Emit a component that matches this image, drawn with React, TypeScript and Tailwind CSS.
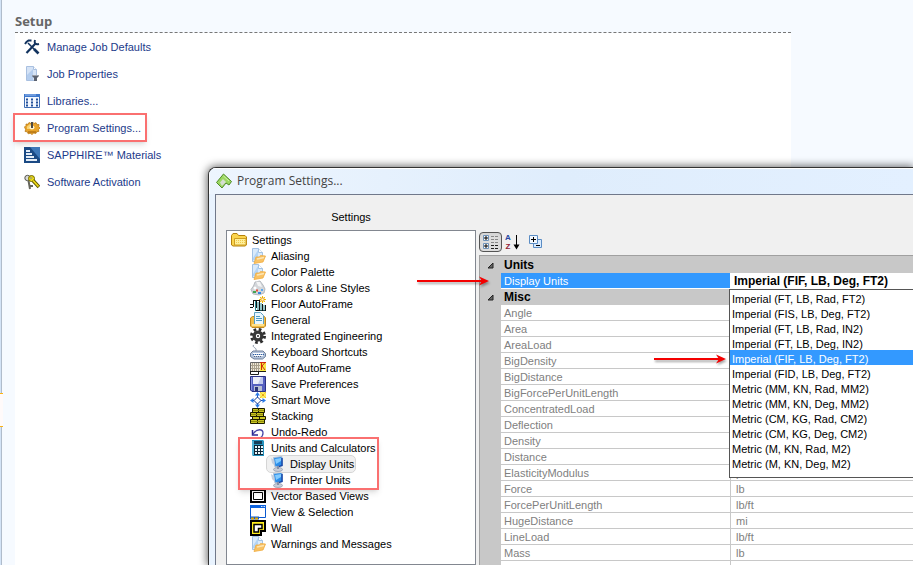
import React from 'react';

type IconName =
  | 'tools' | 'page' | 'library' | 'cog' | 'sapphire' | 'keys'
  | 'folder' | 'file' | 'palette' | 'floor' | 'general' | 'gear'
  | 'keyboard' | 'roof' | 'save' | 'move' | 'stack' | 'undo'
  | 'calc' | 'screen' | 'vector' | 'view' | 'wall';

interface LinkItem {
  label: string;
  icon: IconName;
  marked?: boolean;
}

interface UnitRow {
  name: string;
  value: string;
}

const SETUP_LINKS: LinkItem[] = [
  { label: 'Manage Job Defaults', icon: 'tools' },
  { label: 'Job Properties', icon: 'page' },
  { label: 'Libraries...', icon: 'library' },
  { label: 'Program Settings...', icon: 'cog', marked: true },
  { label: 'SAPPHIRE™ Materials', icon: 'sapphire' },
  { label: 'Software Activation', icon: 'keys' },
];

const TREE_TOP: LinkItem[] = [
  { label: 'Aliasing', icon: 'file' },
  { label: 'Color Palette', icon: 'file' },
  { label: 'Colors & Line Styles', icon: 'palette' },
  { label: 'Floor AutoFrame', icon: 'floor' },
  { label: 'General', icon: 'general' },
  { label: 'Integrated Engineering', icon: 'gear' },
  { label: 'Keyboard Shortcuts', icon: 'keyboard' },
  { label: 'Roof AutoFrame', icon: 'roof' },
  { label: 'Save Preferences', icon: 'save' },
  { label: 'Smart Move', icon: 'move' },
  { label: 'Stacking', icon: 'stack' },
  { label: 'Undo-Redo', icon: 'undo' },
];

const TREE_BOTTOM: LinkItem[] = [
  { label: 'Vector Based Views', icon: 'vector' },
  { label: 'View & Selection', icon: 'view' },
  { label: 'Wall', icon: 'wall' },
  { label: 'Warnings and Messages', icon: 'file' },
];

const UNIT_ROWS: UnitRow[] = [
  { name: 'Angle', value: 'deg' },
  { name: 'Area', value: 'ft2' },
  { name: 'AreaLoad', value: 'lb/ft2' },
  { name: 'BigDensity', value: 'lb/ft3' },
  { name: 'BigDistance', value: 'ft' },
  { name: 'BigForcePerUnitLength', value: 'lb/ft' },
  { name: 'ConcentratedLoad', value: 'lb' },
  { name: 'Deflection', value: 'in' },
  { name: 'Density', value: 'lb/ft3' },
  { name: 'Distance', value: 'ft' },
  { name: 'ElasticityModulus', value: 'psi' },
  { name: 'Force', value: 'lb' },
  { name: 'ForcePerUnitLength', value: 'lb/ft' },
  { name: 'HugeDistance', value: 'mi' },
  { name: 'LineLoad', value: 'lb/ft' },
  { name: 'Mass', value: 'lb' },
  { name: 'Moment', value: 'lb-ft' },
];

const UNIT_OPTIONS = [
  'Imperial (FT, LB, Rad, FT2)',
  'Imperial (FIS, LB, Deg, FT2)',
  'Imperial (FT, LB, Rad, IN2)',
  'Imperial (FT, LB, Deg, IN2)',
  'Imperial (FIF, LB, Deg, FT2)',
  'Imperial (FID, LB, Deg, FT2)',
  'Metric (MM, KN, Rad, MM2)',
  'Metric (MM, KN, Deg, MM2)',
  'Metric (CM, KG, Rad, CM2)',
  'Metric (CM, KG, Deg, CM2)',
  'Metric (M, KN, Rad, M2)',
  'Metric (M, KN, Deg, M2)',
];

const GLYPHS: Record<IconName, React.ReactNode> = {
  tools: (
    <g fill="none" stroke="#12335f">
      <path d="M4 4l9.500 9.500" strokeWidth="1.500" />
      <path d="M11.500 4.500 2.500 14" strokeWidth="2.200" />
      <path d="M1 5l1.500-2 2-1.500h3" strokeWidth="2" />
      <path d="M11 1c-1 3 0 5 4 4" strokeWidth="2" />
      <path d="M10 10l4.500 4.500" strokeWidth="2.600" />
    </g>
  ),
  page: (
    <>
      <path d="M2.500 .5h7l3 3v11h-10z" fill="#d5e3f6" stroke="#a9c0e0" />
      <path d="M3 9 9 3v11H3z" fill="#b4cdee" />
      <path d="M9.500 .5v3h3" fill="#fff" stroke="#a9c0e0" />
      <path d="M8 10h7l-2 2v3h-3v-3z" fill="#5b6270" />
      <path d="M8 9.500h7" stroke="#9aa0aa" />
    </>
  ),
  library: (
    <>
      <path d="M.5 1.500h15v13H.5z" fill="#f4f8ff" stroke="#3f6db3" />
      <path d="M0 1h16v3H0z" fill="#3f78cc" />
      <path d="M1 2h11" stroke="#9dbdf0" />
      <path d="M2 6.500h3M2 9.500h3M2 12.500h3M7 6.500h3M7 9.500h3M7 12.500h3M12 6.500h3M12 9.500h3M12 12.500h3" stroke="#23509a" strokeWidth="2" strokeDasharray="2 1" />
    </>
  ),
  cog: (
    <>
      <path d="M.5 7 2 5.500V4l2 .3L5 2.500l2 1 1.500-1.500L10 3.500l2-.8 1 2 2-.2-.3 2.300L16 8l-1.500 1.500.3 2-2 .2-1 1.800-2-.5L8 14.500l-1.800-1.300-2 .6-.9-2-2.200-.3.5-2z" fill="#e9a52b" stroke="#b97a18" strokeWidth=".8" />
      <path d="M3 6.500 6 4l2 2-2 3H3z" fill="#f9d477" />
      <ellipse cx="8" cy="7.500" rx="2.500" ry="2" fill="#fff3cf" />
      <path d="M8 2v6" stroke="#4d4a45" strokeWidth="2" />
      <path d="M4 12h8" stroke="#9a5c08" />
    </>
  ),
  sapphire: (
    <>
      <path d="M0 0h16v16H0z" fill="#1b4a84" />
      <path d="M6 0h10v12z" fill="#3e78b8" />
      <path d="M2 3h4v2H2zM2 6h6v2H2zM2 9h8v2H2zM2 12h11v2H2z" fill="#e4edf7" />
    </>
  ),
  keys: (
    <>
      <circle cx="3.500" cy="4" r="2.700" fill="#d9d9d9" stroke="#55554d" />
      <path d="M4.500 6.500 6 15M6 12h3" fill="none" stroke="#66665c" strokeWidth="2" />
      <circle cx="7.500" cy="4.500" r="3" fill="#f2e11b" stroke="#6d6500" />
      <path d="M9 6.500 15 13" stroke="#5d5600" strokeWidth="3.600" />
      <path d="M9 6.500 14.500 12.500" stroke="#f2dc19" strokeWidth="1.800" />
      <circle cx="7" cy="4" r="1" fill="#fff" stroke="#6d6500" strokeWidth=".6" />
    </>
  ),
  folder: (
    <>
      <path d="M.5 13V3.500l1.500-2h4l1.500 2H14l1.500 1.500v8l-1.500 1H2z" fill="#fbd44c" stroke="#b4810c" />
      <path d="M3.500 6.500h11.500v6.500H3.500z" fill="#fff09a" stroke="#cf9e22" />
      <path d="M5 8.500h9M5 10.500h9" stroke="#f0ca4c" strokeDasharray="1 1" />
    </>
  ),
  file: (
    <>
      <path d="M2.500 .5h6l4 4v9h-10z" fill="#d9eafb" stroke="#a3c2e4" />
      <path d="M3 10 8 2v10H3z" fill="#b3d4f6" />
      <path d="M8.500 .5v4h4" fill="#fff" stroke="#a3c2e4" />
      <path d="M4 15.500 6 9h3.500l1-1.500 5 .5-2.500 6z" fill="#f9c264" stroke="#efac40" strokeWidth=".8" />
      <path d="M7 11 14 9.500" stroke="#fde6b4" strokeWidth="1.500" />
    </>
  ),
  palette: (
    <>
      <path d="M1 9.500 3.500 6 5 2l5-1 3 4 2 4-1 4-5 2-6-1z" fill="#d3d6da" stroke="#a7acb2" strokeWidth=".8" />
      <path d="M6 1.500 10 2l2 5-4-1z" fill="#f3f4f5" />
      <circle cx="5" cy="8" r="1.500" fill="#fff" />
      <path d="M3 12h3" stroke="#45a454" strokeWidth="2" />
      <path d="M6 10.500h2" stroke="#e54d3a" strokeWidth="2" />
      <path d="M8 13h3" stroke="#3387e0" strokeWidth="2" />
      <path d="M11 10h2" stroke="#5aa9ee" strokeWidth="2" />
    </>
  ),
  floor: (
    <>
      <path d="M0 8.500h4M0 11.500h3M3 4.500h7M3.500 4v7M6.500 5v7M9.500 5v10M12.500 8v7M15.500 9v6M6 14.500h10" stroke="#111" fill="none" />
      <path d="M5.500 5v10M8 6v8M11 7v8M14 9v6" stroke="#2a8c94" />
      <path d="M12.500 0v7M9 3.500h7M10 1l5 5M15 1l-5 5" stroke="#f3c400" />
      <path d="M11 2h3v3h-3z" fill="#fffbb2" stroke="#e77b00" strokeWidth=".6" />
    </>
  ),
  general: (
    <>
      <path d="M.5 6 2.500 4.500h12l1 1.500v8l-1.500 1.500H2L.5 14z" fill="#f2bd49" stroke="#c08a22" />
      <path d="M4.500 .5h6l3 3v9h-9z" fill="#eaf6fd" stroke="#5a9fc4" />
      <path d="M6 4.500h4M6 6.500h6M6 8.500h6" stroke="#4d9cc5" />
      <path d="M2 12h12v2H2z" fill="#ffe18b" />
    </>
  ),
  gear: (
    <>
      <circle cx="8" cy="8" r="6.500" fill="none" stroke="#2e2e2e" strokeWidth="3" strokeDasharray="2.600 2.500" />
      <circle cx="8" cy="8" r="5.500" fill="#363636" />
      <circle cx="8" cy="8" r="2.200" fill="#fff" />
      <circle cx="8" cy="8" r="1" fill="#222" />
    </>
  ),
  keyboard: (
    <>
      <path d="M3.500 1C2 4 7 3 6 7" fill="none" stroke="#8d99ab" />
      <path d="M.5 9.500 3 7h10l2.500 2.500v3l-3 2.500H4L.5 12.500z" fill="#b4c4dc" stroke="#6e7f99" />
      <path d="M3 9.500h10M4 11.500h9" stroke="#fff" />
      <path d="M3 10.500h11" stroke="#2f5fa4" strokeDasharray="1 1" />
      <path d="M4 12.500h8" stroke="#53647e" strokeDasharray="1 1" />
    </>
  ),
  roof: (
    <>
      <path d="M.5 2.500h10v9H.5z" fill="#efe8d6" stroke="#666" />
      <path d="M2.500 3v9M4.500 3v9M6.500 3v9M8.500 3v9M1 5.500h9M1 8.500h9" stroke="#aaa18c" />
      <path d="M10 2h6v9h-6z" fill="#f7e943" />
      <path d="M11.500 2v8M15 2.500 12 6l3 4M10 2.500h6" stroke="#d02a10" fill="none" />
      <path d="M0 11.500h16M.5 12v2.500h8v-3" stroke="#1d1d1d" fill="none" />
    </>
  ),
  save: (
    <>
      <path d="M.5 .5h15v15H2L.5 14z" fill="#555fc0" stroke="#2a3184" />
      <path d="M3 1h10v7H3z" fill="#eceef9" />
      <path d="M11 1h2v7h-5z" fill="#c1c9ed" />
      <path d="M4 10h8v5H4z" fill="#b8bfd2" />
      <path d="M5 11h3v4H5z" fill="#2a3479" />
      <path d="M1.500 1v13" stroke="#8b94e0" />
    </>
  ),
  move: (
    <>
      <path d="M7.500 3v11M2 8.500h12" stroke="#1656c8" fill="none" />
      <path d="M7.500 0 10 3.500H5zM7.500 16 10 12.500H5zM0 8.500 3.500 6v5zM16 8.500 12.500 6v5z" fill="#2a7be8" />
      <path d="M7.500 5 11 8.500 7.500 12 4 8.500z" fill="#fff" stroke="#123a96" />
      <path d="M10 0h6v6h-6z" fill="#ffef5a" />
      <path d="M10.500 .5l5 5M15.500 .5l-5 5" stroke="#e07a00" strokeDasharray="1 1" />
    </>
  ),
  stack: (
    <>
      <path d="M2.500 .5h12v4h-12zM.5 4.500h13v4H.5zM2.500 8.500h13v3h-13zM.5 11.500h14v4H.5z" fill="#c9c524" stroke="#1d1c00" />
      <path d="M8.500 1v3M6.500 5v3M9.500 9v2M7.500 12v3" stroke="#1d1c00" />
      <path d="M3 2.500h11M1 6.500h12M1 13.500h13" stroke="#918d0c" />
    </>
  ),
  undo: (
    <>
      <path d="M3 10c4-6 10-5 10-1 0 2-1 4-3 5" fill="none" stroke="#4a48a8" strokeWidth="1.300" />
      <path d="M2.500 6v5H8" fill="none" stroke="#2d2a92" strokeWidth="1.500" />
    </>
  ),
  calc: (
    <>
      <path d="M2 0h11l1 1v15H3l-1-1z" fill="#2593bf" />
      <path d="M4 1h8v3H4z" fill="#163e58" />
      <path d="M3 1v14" stroke="#7fd3ee" />
      <path d="M4 5h9v10H4z" fill="#0d2636" />
      <path d="M5 7h8M5 10h8M5 13h8" stroke="#e8f5fb" strokeWidth="2" strokeDasharray="2 1" />
    </>
  ),
  screen: (
    <>
      <path d="M4.500 1.500 13 .5l.5 9L6 11z" fill="#2a8eea" stroke="#b6c3d6" />
      <path d="M6 3 12 2v3L7 8z" fill="#83cbff" />
      <path d="M13 2v7.500L8 11" fill="none" stroke="#1748a9" strokeWidth="1.500" />
      <path d="M2 2 5 4v5L3 7z" fill="#c5cfde" />
      <ellipse cx="9" cy="13.500" rx="4.500" ry="2" fill="#c9ced8" stroke="#949db0" strokeWidth=".8" />
      <path d="M8 10h2v3H8z" fill="#8791a8" />
    </>
  ),
  vector: (
    <>
      <path d="M1 2h14v12H1z" fill="#fff" stroke="#000" strokeWidth="2" />
      <path d="M3.500 4.500h9v7h-9z" fill="#fff" stroke="#000" />
    </>
  ),
  view: (
    <>
      <path d="M.5 2h15v11.500H.5z" fill="#fff" stroke="#0b59cf" />
      <path d="M0 1h16v3H0z" fill="#0d63de" />
      <path d="M11 2.500h4" stroke="#cfe2ff" strokeDasharray="1 .5" />
      <path d="M0 14h9" stroke="#0b59cf" strokeWidth="3" />
      <path d="M1 14.500h3M5 14.500h3" stroke="#e5a700" strokeWidth="2" />
    </>
  ),
  wall: (
    <>
      <path d="M1 1h14v10h-4v4H1z" fill="#ffee1f" stroke="#000" strokeWidth="2" />
      <path d="M4 4.500h8v4H8.500v3.500H4z" fill="#fff" stroke="#000" strokeWidth="1.500" />
    </>
  ),
};

const Icon = ({ name }: { name: IconName }) => (
  <svg viewBox="0 0 16 16" className="size-4 shrink-0" aria-hidden="true">
    {GLYPHS[name]}
  </svg>
);

const Arrow = () => (
  <svg viewBox="0 0 72 14" className="block h-3.5 w-[72px] drop-shadow-[1px_2px_1px_rgba(0,0,0,0.35)]" aria-hidden="true">
    <path d="M0 7h66" stroke="#f40000" strokeWidth="2" />
    <path d="M72 7 62 2.500 65 7 62 11.500z" fill="#f40000" />
  </svg>
);

const Expander = () => (
  <svg viewBox="0 0 7 7" className="mx-auto size-[7px]" aria-hidden="true">
    <path d="M6 1v5H1z" fill="#666" stroke="#222" />
  </svg>
);

const TreeItem = ({ item, selected = false }: { item: LinkItem; selected?: boolean }) => (
  <li role="treeitem" aria-selected={selected} className="flex h-4 items-center gap-[5px] whitespace-nowrap">
    <Icon name={item.icon} />
    {item.label}
  </li>
);

const SetupPanel = () => (
  <main className="mr-[122px] ml-3 flex flex-1 flex-col pt-3">
    <h2 className="h-[21px] border-b border-dashed border-[#777] font-['Open_Sans',sans-serif] text-[13px] leading-[18px] font-bold text-[#666]">
      Setup
    </h2>
    <ul className="flex-1 bg-white pl-[9px]">
      {SETUP_LINKS.map(item => (
        <li key={item.label} className="relative flex h-[27px] items-center">
          <a href="#" className="flex items-center gap-[7px] whitespace-nowrap text-[#1c3a8a]">
            <Icon name={item.icon} />
            <span className="pt-0.5">{item.label}</span>
          </a>
          {item.marked && (
            <span className="pointer-events-none absolute -top-px -left-[11px] h-[29px] w-[134px] border-2 border-[#fa7070] shadow-md" />
          )}
        </li>
      ))}
    </ul>
  </main>
);

const SettingsTree = () => (
  <div className="flex w-[250px] shrink-0 flex-col">
    <div id="tree-label" className="h-[35px] pt-3.5 text-center leading-4">Settings</div>
    <ul role="tree" aria-labelledby="tree-label" className="flex-1 border border-[#828790] bg-white pt-px pl-1">
      <li role="treeitem" aria-expanded="true">
        <div className="flex h-4 items-center gap-[5px]">
          <Icon name="folder" />
          Settings
        </div>
        <ul role="group" className="pl-[19px]">
          {TREE_TOP.map(item => <TreeItem key={item.label} item={item} />)}
          <li role="treeitem" aria-expanded="true" className="relative">
            <div className="flex h-4 items-center gap-[5px]">
              <Icon name="calc" />
              Units and Calculators
            </div>
            <ul role="group" className="pl-[19px]">
              <div className="-ml-0.5 w-[88px] rounded-sm bg-[#f0f0f0] pl-0.5 outline outline-[#d5d5d5]">
                <TreeItem item={{ label: 'Display Units', icon: 'screen' }} selected />
              </div>
              <TreeItem item={{ label: 'Printer Units', icon: 'screen' }} />
            </ul>
            <span className="pointer-events-none absolute -top-[3px] -left-3 h-[53px] w-[141px] border-2 border-[#fa7070] shadow-md" />
          </li>
          {TREE_BOTTOM.map(item => <TreeItem key={item.label} item={item} />)}
        </ul>
      </li>
    </ul>
  </div>
);

const Toolbar = () => (
  <div className="flex h-[60px] items-start pt-[37px]">
    <button type="button" aria-label="Categorized" className="flex h-5 w-[23px] items-center justify-center rounded-sm border border-[#555] bg-[#dedede] shadow-inner">
      <svg viewBox="0 0 17 16" className="h-4 w-[17px]">
        <path d="M1.500 1.500h5v5h-5zM1.500 9.500h5v5h-5z" fill="#fff" stroke="#6d91b8" />
        <path d="M2 4h4M4 2v4M2 12h4M4 10v4" stroke="#000" />
        <path d="M9 2.500h3M13 2.500h3M9 5.500h3M13 5.500h3M9 8.500h3M13 8.500h3" stroke="#888" />
        <path d="M9 11.500h3M13 11.500h3M9 14.500h3M13 14.500h3" stroke="#222" />
      </svg>
    </button>
    <button type="button" aria-label="Alphabetical" className="flex h-5 w-[22px] items-center pl-[3px]">
      <span className="flex flex-col text-[8px] leading-[9px] font-bold">
        <span className="text-[#2747a0]">A</span>
        <span className="text-[#932034]">Z</span>
      </span>
      <svg viewBox="0 0 7 16" className="ml-0.5 h-4 w-[7px]">
        <path d="M3.500 1v12" stroke="#000" />
        <path d="M.5 10.500h6l-3 5z" fill="#000" />
      </svg>
    </button>
    <button type="button" aria-label="Expand all" className="flex h-5 w-6 items-center pl-1">
      <svg viewBox="0 0 16 16" className="size-4">
        <path d="M5.500 5.500h8v8h-8z" fill="#d7eaff" stroke="#5a8cc4" />
        <path d="M1.500 1.500h8v8h-8z" fill="#f2f8ff" stroke="#5a8cc4" />
        <path d="M3 5.500h5M5.500 3v5M8 11.500h4" stroke="#000" />
      </svg>
    </button>
  </div>
);

const CategoryRow = ({ title }: { title: string }) => (
  <tr className="h-4 bg-[#c8c8c8]">
    <td><Expander /></td>
    <th colSpan={2} className="pl-[3px] text-left text-[12px] font-bold">{title}</th>
  </tr>
);

const UnitPicker = () => (
  <div className="relative -ml-px">
    <input
      aria-label="Display Units"
      defaultValue="Imperial (FIF, LB, Deg, FT2)"
      className="block h-[15px] w-full bg-white pt-px pl-1 text-[12px] font-bold text-black outline-none"
    />
    <div className="absolute top-4 right-0 -left-px z-10">
      <select
        size={12}
        aria-label="Display Units choices"
        defaultValue="Imperial (FIF, LB, Deg, FT2)"
        className="block h-[189px] w-full appearance-none overflow-hidden border border-r-0 border-[#555] bg-white text-black outline-none"
      >
        {UNIT_OPTIONS.map(option => (
          <option
            key={option}
            className="h-[15px] min-h-0 px-0.5 pt-[3px] pb-0 leading-3 checked:bg-[#3399ff] checked:text-white"
          >
            {option}
          </option>
        ))}
      </select>
      <div className="pointer-events-none absolute top-[63px] -left-[75px]"><Arrow /></div>
    </div>
  </div>
);

const PropertyGrid = () => (
  <div className="min-w-0 flex-1">
    <Toolbar />
    <div className="border-t border-l border-[#a0a0a0] bg-[#c8c8c8] pt-px">
      <table className="w-full table-fixed border-separate border-spacing-0 leading-[13px]">
        <colgroup>
          <col className="w-[21px]" />
          <col className="w-[230px]" />
          <col />
        </colgroup>
        <tbody>
          <CategoryRow title="Units" />
          <tr className="h-4">
            <td className="relative p-0">
              <div className="pointer-events-none absolute top-px right-3 z-10"><Arrow /></div>
            </td>
            <td className="border-b border-white bg-[#3399ff] p-0 pt-0.5 pl-[3px] text-white">Display Units</td>
            <td className="border-b border-white bg-white p-0 align-top"><UnitPicker /></td>
          </tr>
          <CategoryRow title="Misc" />
          {UNIT_ROWS.map(row => (
            <tr key={row.name} className="h-4 text-[#808080]">
              <td className="p-0" />
              <td className="border-r border-b border-[#c8c8c8] bg-white p-0 pt-0.5 pl-[3px]">{row.name}</td>
              <td className="border-b border-[#c8c8c8] bg-white p-0 pt-0.5 pl-[5px]">{row.value}</td>
            </tr>
          ))}
        </tbody>
      </table>
    </div>
  </div>
);

const SettingsDialog = () => (
  <section
    aria-label="Program Settings"
    className="absolute top-[167px] right-0 bottom-0 left-52 flex flex-col overflow-hidden rounded-tl-lg border-t border-l border-[#333] bg-[#e9f3fe] shadow-[0_0_8px_1px_rgba(0,0,0,0.6)]"
  >
    <header className="flex h-[26px] shrink-0 items-center gap-[5px] bg-linear-to-r from-[#edf5fe] via-[#dfedfc] to-[#e3f0ff] pl-[7px] font-['Open_Sans',sans-serif] text-[12px] text-[#444] shadow-[inset_1px_1px_0_#fff]">
      <svg viewBox="0 0 16 16" className="size-4" aria-hidden="true">
        <path d="M.5 9.500 7.500 1 15.500 8.500l-2.500 3.500-3-2L6 15z" fill="#9bd763" stroke="#4f8b28" />
        <path d="M4 9.500 7 6l3 3-4 4z" fill="#d5dfd0" />
        <path d="M7.500 3 13 8" stroke="#d2f3a8" />
      </svg>
      Program Settings...
    </header>
    <div className="ml-1.5 flex min-h-0 flex-1 gap-[3px] border-t border-l border-[#70788a] bg-[#f0f0f0] pl-2.5">
      <SettingsTree />
      <PropertyGrid />
    </div>
  </section>
);

export default function App() {
  return (
    <div className="relative flex min-h-screen overflow-hidden bg-[#f6faff] font-['Liberation_Sans',Arial,sans-serif] text-[11px] text-black">
      <div className="flex w-[3px] shrink-0 flex-col">
        <div className="mr-px h-[393px] border-r border-[#b0bccb] bg-[#d3e3f6]" />
        <div className="h-[34px] border-y border-[#fbb414] bg-[#fffafa]" />
        <div className="mr-px flex-1 border-r border-[#b0bccb] bg-[#d3e3f6]" />
      </div>
      <SetupPanel />
      <SettingsDialog />
    </div>
  );
}
